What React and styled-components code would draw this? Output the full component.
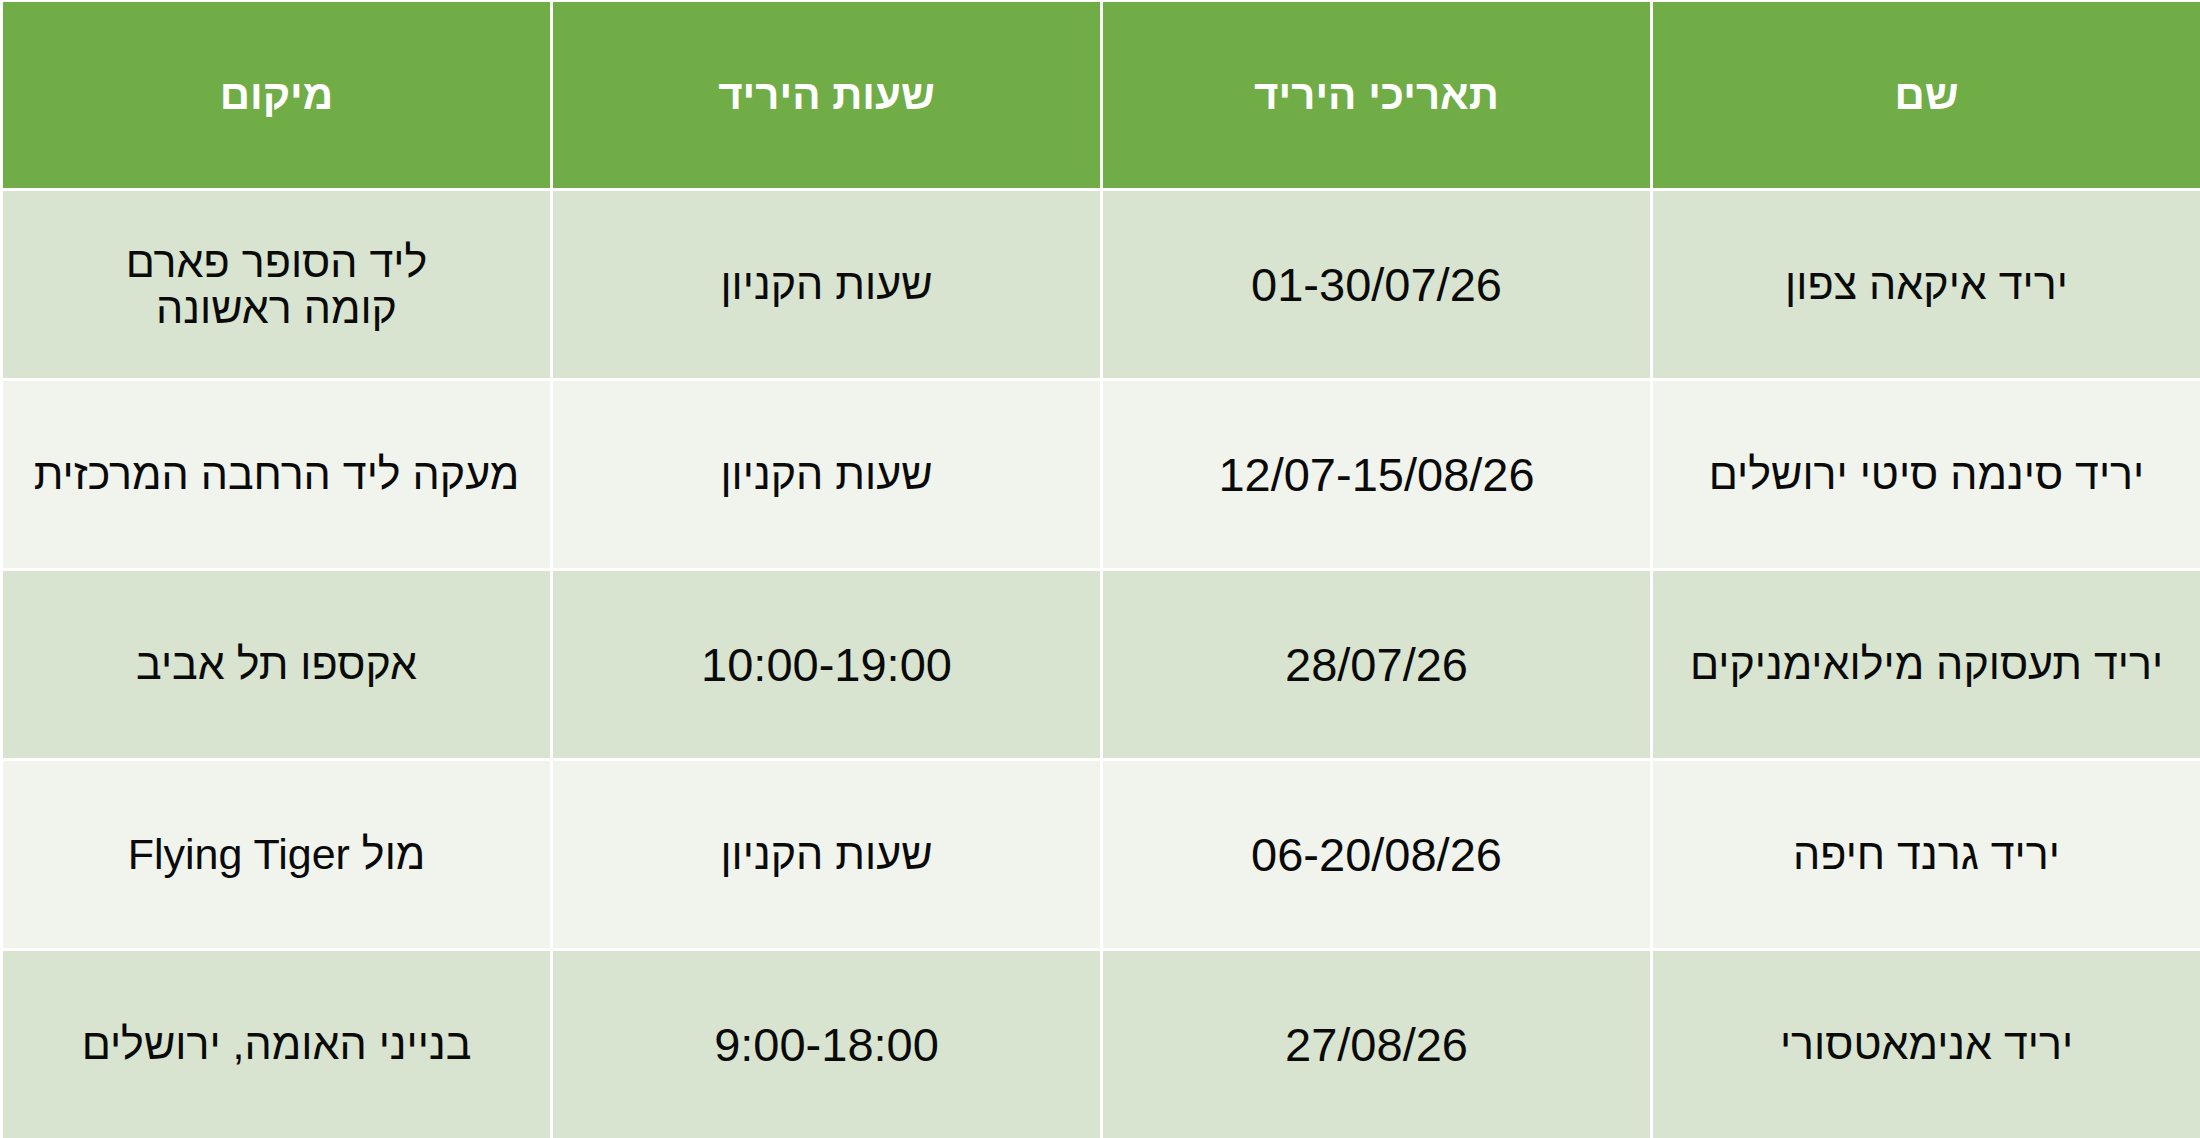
import styled, { createGlobalStyle } from "styled-components";

// Fair schedule table, Hebrew, right-to-left
const GlobalStyle = createGlobalStyle`
    html, body {
        margin: 0;
        padding: 0;
        background: #ffffff;
    }
    body {
        font-family: "Liberation Sans", "DejaVu Sans", sans-serif;
    }
`;

const headers = ["שם", "תאריכי היריד", "שעות היריד", "מיקום"];

const rows = [
    ["יריד איקאה צפון", "01-30/07/26", "שעות הקניון", ["ליד הסופר פארם", "קומה ראשונה"]],
    ["יריד סינמה סיטי ירושלים", "12/07-15/08/26", "שעות הקניון", "מעקה ליד הרחבה המרכזית"],
    ["יריד תעסוקה מילואימניקים", "28/07/26", "10:00-19:00", "אקספו תל אביב"],
    ["יריד גרנד חיפה", "06-20/08/26", "שעות הקניון", "מול Flying Tiger"],
    ["יריד אנימאטסורי", "27/08/26", "9:00-18:00", "בנייני האומה, ירושלים"],
];

// dates and hours are rendered a bit larger, as in the original
const isNumeric = (text) => typeof text === "string" && /^[\d/:\-]+$/.test(text);

const App = () => {
    return (
        <>
            <GlobalStyle />
            <Table dir="rtl">
                {headers.map((h) => (
                    <HeadCell key={h}>{h}</HeadCell>
                ))}
                {rows.map((row, i) =>
                    row.map((cell, j) => (
                        <Cell key={`${i}-${j}`} $odd={i % 2 === 0} $numeric={isNumeric(cell)}>
                            {Array.isArray(cell) ? (
                                <Lines>
                                    {cell.map((line) => (
                                        <span key={line}>{line}</span>
                                    ))}
                                </Lines>
                            ) : (
                                cell
                            )}
                        </Cell>
                    ))
                )}
            </Table>
        </>
    );
};

const Table = styled.div`
    width: 2200px;
    height: 1138px;
    box-sizing: border-box;
    padding: 2px 0 0 3px;
    display: grid;
    grid-template-columns: repeat(4, 1fr);
    grid-template-rows: 186px repeat(5, 187px);
    gap: 3px;
    background: #ffffff;
    overflow: hidden;
`;

const HeadCell = styled.div`
    display: flex;
    align-items: center;
    justify-content: center;
    background: #70ad47;
    color: #ffffff;
    font-weight: 700;
    font-size: 42px;
`;

const Cell = styled.div`
    display: flex;
    align-items: center;
    justify-content: center;
    text-align: center;
    background: ${({ $odd }) => ($odd ? "#d8e4cf" : "#f0f4ed")};
    color: #0a0a0a;
    font-size: ${({ $numeric }) => ($numeric ? "47px" : "43px")};
`;

const Lines = styled.div`
    display: flex;
    flex-direction: column;
    align-items: center;
    line-height: 46px;
`;

export default App;
